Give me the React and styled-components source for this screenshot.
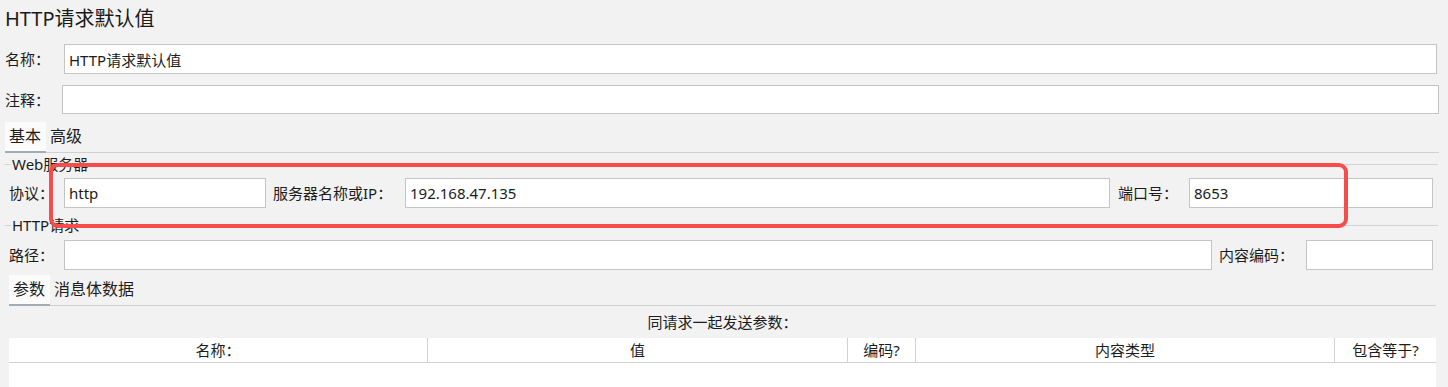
import React from 'react';
import styled, { createGlobalStyle } from 'styled-components';

const GlobalStyle = createGlobalStyle`
  html, body {
    margin: 0;
    padding: 0;
    background: #f2f2f2;
    overflow: hidden;
  }
  * {
    box-sizing: border-box;
  }
`;

const fontStack = `"Noto Sans", "Noto Sans CJK SC", sans-serif`;

const Page = styled.div`
  position: relative;
  width: 1448px;
  height: 387px;
  padding: 0 10px 0 5px;
  background: #f2f2f2;
  color: #1c1c1c;
  font-family: ${fontStack};
  font-size: 15px;
  overflow: hidden;
`;

const Title = styled.div`
  height: 40px;
  padding-top: 4px;
  font-size: 20px;
  line-height: 30px;
  color: #1a1a1a;
`;

const FieldRow = styled.div`
  display: flex;
  align-items: center;
  height: ${({ $h }) => $h || 30}px;
  margin-top: ${({ $top }) => $top || 0}px;
  margin-right: ${({ $right }) => $right || 0}px;
`;

const Label = styled.span`
  flex: none;
  width: ${({ $w }) => $w}px;
  margin-left: ${({ $gap }) => $gap || 0}px;
  white-space: nowrap;
  line-height: 20px;
`;

const TextBox = styled.input`
  flex: ${({ $w }) => ($w ? 'none' : '1')};
  width: ${({ $w }) => ($w ? `${$w}px` : 'auto')};
  min-width: 0;
  height: 100%;
  margin: 0;
  padding: 0 4px;
  border: 1px solid #c4c4c4;
  background: #ffffff;
  color: #1c1c1c;
  font-family: ${fontStack};
  font-size: 15px;
  outline: none;
`;

const TabBar = styled.div`
  display: flex;
  margin-top: ${({ $top }) => $top || 0}px;
  margin-right: ${({ $right }) => $right || 0}px;
  border-bottom: 1px solid #d0d0d0;
`;

const Tab = styled.div`
  height: 31px;
  padding: 0 5px 0 4px;
  font-size: 16px;
  line-height: 29px;
  background: ${({ $active }) => ($active ? '#fbfbfb' : 'transparent')};
  border-bottom: 2px solid ${({ $active }) => ($active ? '#a2abb8' : 'transparent')};
  margin-bottom: -1px;
`;

const Group = styled.div`
  margin-top: ${({ $top }) => $top || 0}px;
  padding: 0 0 0 4px;
`;

const GroupHeader = styled.div`
  display: flex;
  align-items: center;
  height: 16px;
  margin-left: -4px;
  line-height: 16px;

  &::before {
    content: '';
    width: 6px;
    height: 1px;
    background: #d2d2d2;
  }

  &::after {
    content: '';
    flex: 1;
    height: 1px;
    background: #d2d2d2;
  }
`;

const Legend = styled.span`
  padding: 0 1px;
  white-space: nowrap;
`;

const Caption = styled.div`
  height: 32px;
  margin-right: 2px;
  line-height: 32px;
  text-align: center;
`;

const Table = styled.div`
  margin-right: 2px;
  background: #ffffff;
  height: 60px;
`;

const HeaderRow = styled.div`
  display: grid;
  grid-template-columns: 419px 420px 68px 419px 1fr;
  height: 25px;
  border-bottom: 1px solid #d2d2d2;
`;

const HeaderCell = styled.div`
  line-height: 24px;
  text-align: center;
  white-space: nowrap;
  border-right: ${({ $last }) => ($last ? 'none' : '1px solid #d2d2d2')};
`;

const Highlight = styled.div`
  position: absolute;
  left: 49px;
  top: 163px;
  width: 1299px;
  height: 65px;
  border: 4px solid #f64c4c;
  border-radius: 9px;
  pointer-events: none;
`;

const columns = ['名称：', '值', '编码?', '内容类型', '包含等于?'];

const App = () => {
  return (
    <>
      <GlobalStyle />
      <Page>
        <Title>HTTP请求默认值</Title>

        <FieldRow $top={4} $right={1}>
          <Label $w={59}>名称：</Label>
          <TextBox defaultValue="HTTP请求默认值" readOnly />
        </FieldRow>

        <FieldRow $top={11} $h={29} $right={-1}>
          <Label $w={57}>注释：</Label>
          <TextBox defaultValue="" readOnly />
        </FieldRow>

        <TabBar $top={8} $right={-1}>
          <Tab $active>基本</Tab>
          <Tab>高级</Tab>
        </TabBar>

        <Group $top={3}>
          <GroupHeader>
            <Legend>Web服务器</Legend>
          </GroupHeader>
          <FieldRow $top={6} $right={5}>
            <Label $w={55}>协议：</Label>
            <TextBox $w={202} defaultValue="http" readOnly />
            <Label $w={132} $gap={7}>服务器名称或IP：</Label>
            <TextBox defaultValue="192.168.47.135" readOnly />
            <Label $w={71} $gap={8}>端口号：</Label>
            <TextBox $w={244} defaultValue="8653" readOnly />
          </FieldRow>
        </Group>

        <Group $top={9}>
          <GroupHeader>
            <Legend>HTTP请求</Legend>
          </GroupHeader>
          <FieldRow $top={7} $right={5}>
            <Label $w={55}>路径：</Label>
            <TextBox defaultValue="" readOnly />
            <Label $w={87} $gap={7}>内容编码：</Label>
            <TextBox $w={127} defaultValue="" readOnly />
          </FieldRow>

          <TabBar $top={5} $right={2}>
            <Tab $active>参数</Tab>
            <Tab>消息体数据</Tab>
          </TabBar>

          <Caption>同请求一起发送参数：</Caption>

          <Table>
            <HeaderRow>
              {columns.map((c, i) => (
                <HeaderCell key={c} $last={i === columns.length - 1}>
                  {c}
                </HeaderCell>
              ))}
            </HeaderRow>
          </Table>
        </Group>

        <Highlight />
      </Page>
    </>
  );
};

export default App;
